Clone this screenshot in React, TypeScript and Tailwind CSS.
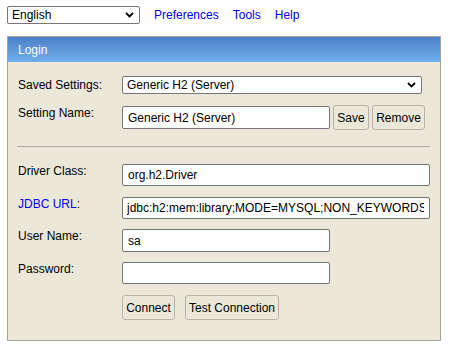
import React from "react";

const font = { fontFamily: '"Liberation Sans", Arial, sans-serif' };

const Chevron = () => (
  <svg width="9" height="6" viewBox="0 0 9 6" className="pointer-events-none absolute right-[5px] top-1/2 -translate-y-1/2">
    <path d="M1 1l3.5 3.5L8 1" fill="none" stroke="#000" strokeWidth="1.8" />
  </svg>
);

const Select = ({ value, className }: { value: string; className: string }) => (
  <div
    role="combobox"
    className={"relative flex items-center bg-white border border-[#767676] rounded-[2px] pl-[4px] text-[12px] leading-[14px] text-black " + className}
    style={font}
  >
    {value}
    <Chevron />
  </div>
);

const Input = ({ value, className }: { value: string; className: string }) => (
  <input
    defaultValue={value}
    className={"bg-white border border-[#767676] rounded-[2px] px-[5px] text-[12px] text-black outline-none " + className}
    style={font}
  />
);

const Button = ({ label, className }: { label: string; className: string }) => (
  <button
    className={"h-[25px] bg-[#ebe8da] border border-[#b5b2a6] rounded-[3px] text-[12px] text-black " + className}
    style={font}
  >
    {label}
  </button>
);

const Label = ({ children, blue }: { children: React.ReactNode; blue?: boolean }) => (
  <div className={"w-[104px] shrink-0 text-[12px] leading-[14px] " + (blue ? "text-[#0000ff]" : "text-black")}>
    {children}
  </div>
);

export default function App() {
  return (
    <div className="bg-white min-h-screen pl-[7px] pt-[6px] w-[451px] h-[352px]" style={font}>
      <div className="flex items-center h-[18px]">
        <Select value="English" className="w-[133px] h-[18px]" />
        <a className="ml-[14px] text-[12px] text-[#0000ff]">Preferences</a>
        <a className="ml-[14px] text-[12px] text-[#0000ff]">Tools</a>
        <a className="ml-[14px] text-[12px] text-[#0000ff]">Help</a>
      </div>

      <div className="mt-[12px] w-[434px] border border-[#a8a598] bg-[#ebe8da] pb-[20px]">
        <div className="h-[25px] bg-gradient-to-b from-[#4d80c6] to-[#6fb0ee] flex items-center pl-[10px] text-[12px] text-white">
          Login
        </div>

        <div className="flex items-center pl-[10px] mt-[14px]">
          <Label>Saved Settings:</Label>
          <Select value="Generic H2 (Server)" className="w-[300px] h-[18px]" />
        </div>

        <div className="flex items-start pl-[10px] mt-[11px]">
          <div className="mt-[1px]">
            <Label>Setting Name:</Label>
          </div>
          <Input value="Generic H2 (Server)" className="w-[208px] h-[23px] mt-[1px]" />
          <Button label="Save" className="ml-[3px] w-[36px]" />
          <Button label="Remove" className="ml-[3px] w-[53px]" />
        </div>

        <div className="mt-[16px] ml-[9px] mr-[10px] h-px bg-[#a9a9a9]" />

        <div className="flex items-start pl-[10px] mt-[17px]">
          <Label>Driver Class:</Label>
          <Input value="org.h2.Driver" className="w-[308px] h-[22px]" />
        </div>

        <div className="flex items-start pl-[10px] mt-[11px]">
          <Label blue>
            JDBC URL<span className="text-black">:</span>
          </Label>
          <Input value="jdbc:h2:mem:library;MODE=MYSQL;NON_KEYWORDS=USER" className="w-[308px] h-[22px] pl-[4px]" />
        </div>

        <div className="flex items-start pl-[10px] mt-[10px]">
          <Label>User Name:</Label>
          <Input value="sa" className="w-[208px] h-[23px]" />
        </div>

        <div className="flex items-start pl-[10px] mt-[10px]">
          <Label>Password:</Label>
          <Input value="" className="w-[208px] h-[22px]" />
        </div>

        <div className="flex items-start pl-[114px] mt-[11px]">
          <Button label="Connect" className="w-[53px]" />
          <Button label="Test Connection" className="ml-[10px] w-[94px]" />
        </div>
      </div>
    </div>
  );
}
